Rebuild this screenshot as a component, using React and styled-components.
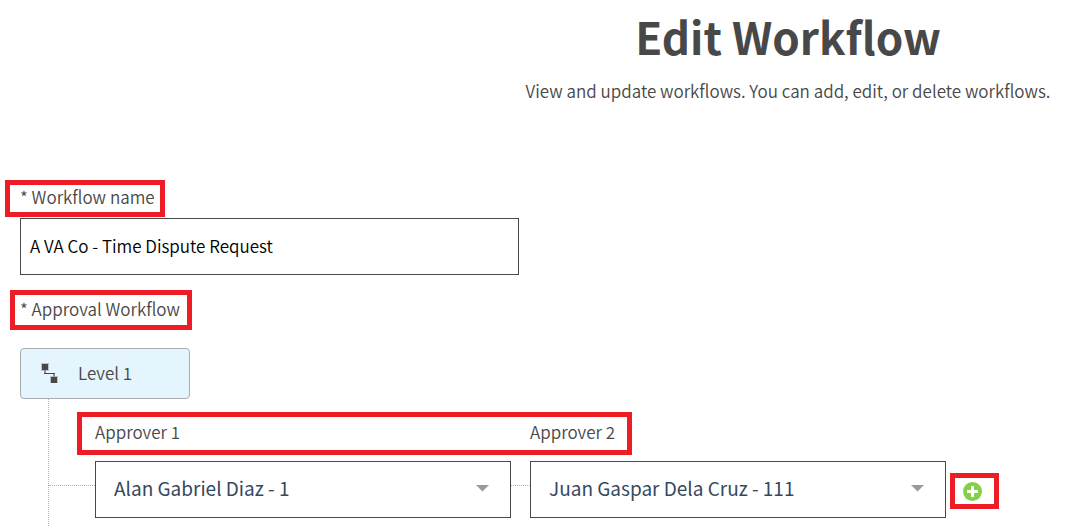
import React, { useState } from "react";
import styled, { createGlobalStyle } from "styled-components";

const GlobalStyle = createGlobalStyle`
  *, *::before, *::after { box-sizing: border-box; }
  body {
    margin: 0;
    background: #fff;
    color: #484848;
    font-family: "Noto Sans CJK SC", "Noto Sans", sans-serif;
    font-size: 17px;
    font-weight: 350;
    line-height: 24px;
  }
  input, select, button { font-family: inherit; font-weight: inherit; }
`;

const Page = styled.main`
  display: flex;
  flex-direction: column;
  min-height: 100vh;
`;

const Header = styled.header`
  padding: 4px 0 0 500px;
  text-align: center;
`;

const Title = styled.h1`
  margin: 0;
  font-size: 44px;
  line-height: 64px;
  font-weight: 700;
`;

const Subtitle = styled.p`
  margin: 11px 0 0;
`;

const Form = styled.form`
  flex: 1;
  display: flex;
  flex-direction: column;
  align-items: flex-start;
  padding: 77px 20px 0;
`;

const Highlight = styled.div`
  display: flex;
  align-items: center;
  border: 5px solid #ee1c25;
  height: ${(p) => p.$height}px;
  padding: 0 ${(p) => p.$end}px 3px ${(p) => p.$start}px;
  margin-left: ${(p) => -5 - p.$start}px;
`;

const FitHighlight = styled(Highlight)`
  width: fit-content;
`;

const Label = styled.label`
  white-space: nowrap;
`;

const TextInput = styled.input`
  width: 100%;
  max-width: 499px;
  height: 57px;
  margin: 1px 0 15px;
  padding: 0 9px 2px;
  border: 1px solid #484848;
  border-radius: 0;
  background: #fff;
  color: #000;
  font-size: 17px;
`;

const LevelButton = styled.button`
  display: flex;
  align-items: center;
  gap: 19px;
  width: 170px;
  height: 51px;
  margin-top: 18px;
  padding: 0 20px 2px;
  border: 1px solid #a9adaf;
  border-radius: 4px;
  background: #e4f5fd;
  color: #484848;
  font-size: 17px;
  line-height: 24px;
`;

const Tree = styled.section`
  flex: 1;
  align-self: stretch;
  margin-left: 28px;
  padding: 13px 0 8px 46px;
  border-left: 1px dotted #b4b4b4;
`;

const ApproverLabels = styled.div`
  display: grid;
  grid-template-columns: 435px auto;
`;

const ApproverRow = styled.div`
  display: flex;
  align-items: flex-start;
  margin: 6px 0 0 -46px;
`;

const Connector = styled.span`
  flex: 0 0 ${(p) => p.$length}px;
  margin-top: 24px;
  border-top: 1px dotted #b4b4b4;
`;

const SelectBox = styled.div`
  position: relative;
  flex: 0 1 416px;
`;

const Select = styled.select`
  appearance: none;
  display: block;
  width: 100%;
  height: 57px;
  padding: 0 40px 5px 18px;
  border: 1px solid #484848;
  border-radius: 0;
  background: #fff;
  color: #34495e;
  font-size: 19px;
  font-weight: 400;
`;

const Caret = styled.svg`
  position: absolute;
  top: 24px;
  right: 22px;
  pointer-events: none;
`;

const AddFrame = styled.div`
  display: flex;
  align-items: center;
  justify-content: center;
  width: 49px;
  height: 36px;
  margin: 12px 0 0 4px;
  padding-right: 4px;
  border: 5px solid #ee1c25;
`;

const AddButton = styled.button`
  display: flex;
  padding: 0;
  border: 0;
  background: none;
`;

const LevelIcon = () => (
  <svg width="18" height="21" viewBox="0 0 18 21" aria-hidden="true">
    <path d="M0 1H8V9H0ZM9 14H17V21H9Z" fill="#b9c4c9" />
    <path d="M4 8V11M13 12V15" stroke="#8e9497" strokeWidth="2" />
    <path d="M3 11.500H14" stroke="#484848" />
    <path d="M1 2H7V8H1ZM10 15H16V21H10Z" fill="#484848" />
  </svg>
);

const PlusIcon = () => (
  <svg width="19" height="19" viewBox="0 0 19 19" aria-hidden="true">
    <circle cx="9.500" cy="9.500" r="9.500" fill="#84d04b" />
    <path d="M9.500 4V15M4 9.500H15" stroke="#fff" strokeWidth="3" />
  </svg>
);

const approvers = ["Alan Gabriel Diaz - 1", "Juan Gaspar Dela Cruz - 111"];

function ApproverSelect({ id, initial }) {
  const [value, setValue] = useState(initial);
  return (
    <SelectBox>
      <Select id={id} value={value} onChange={(e) => setValue(e.target.value)}>
        {approvers.map((name) => (
          <option key={name}>{name}</option>
        ))}
      </Select>
      <Caret width="13" height="7" viewBox="0 0 13 7" aria-hidden="true">
        <path d="M0 0H13L6.500 6.500Z" fill="#999" />
      </Caret>
    </SelectBox>
  );
}

export default function App() {
  return (
    <>
      <GlobalStyle />
      <Page>
        <Header>
          <Title>Edit Workflow</Title>
          <Subtitle>View and update workflows. You can add, edit, or delete workflows.</Subtitle>
        </Header>
        <Form onSubmit={(e) => e.preventDefault()}>
          <Highlight $height={37} $start={10} $end={5}>
            <Label htmlFor="workflow-name">* Workflow name</Label>
          </Highlight>
          <TextInput id="workflow-name" defaultValue="A VA Co - Time Dispute Request" />
          <Highlight $height={40} $start={5} $end={7}>
            <Label htmlFor="level-1">* Approval Workflow</Label>
          </Highlight>
          <LevelButton id="level-1" type="button">
            <LevelIcon />
            Level 1
          </LevelButton>
          <Tree>
            <FitHighlight $height={43} $start={13} $end={12}>
              <ApproverLabels>
                <Label htmlFor="approver-1">Approver 1</Label>
                <Label htmlFor="approver-2">Approver 2</Label>
              </ApproverLabels>
            </FitHighlight>
            <ApproverRow>
              <Connector $length={46} />
              <ApproverSelect id="approver-1" initial={approvers[0]} />
              <Connector $length={19} />
              <ApproverSelect id="approver-2" initial={approvers[1]} />
              <AddFrame>
                <AddButton type="button" aria-label="Add approver">
                  <PlusIcon />
                </AddButton>
              </AddFrame>
            </ApproverRow>
          </Tree>
        </Form>
      </Page>
    </>
  );
}
